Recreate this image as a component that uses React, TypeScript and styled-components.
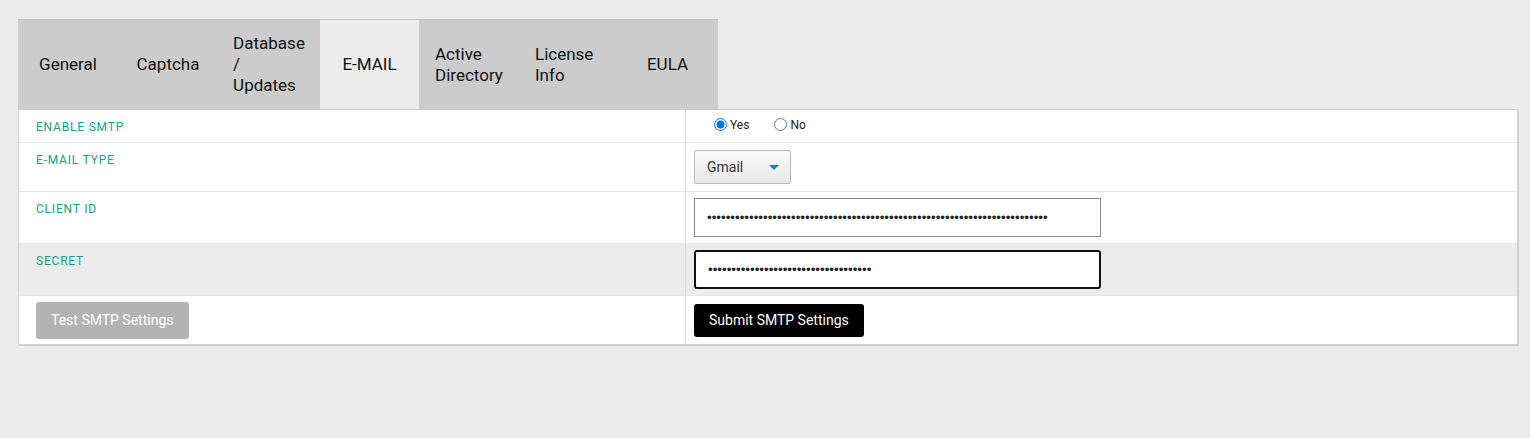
import React from 'react';
import styled, { createGlobalStyle } from 'styled-components';

const GlobalStyle = createGlobalStyle`
  html, body {
    margin: 0;
    padding: 0;
    background: #ececec;
    font-family: Roboto, "Liberation Sans", Arial, sans-serif;
  }
`;

const Page = styled.div`
  padding: 19px 12px 40px 18px;
`;

const TabBar = styled.div`
  display: flex;
  width: 700px;
  height: 90px;
  background: #cccccc;
  border-top: 1px solid #c4c4c4;
  box-sizing: border-box;
`;

const Tab = styled.div<{ $active?: boolean; $w: number }>`
  width: ${p => p.$w}px;
  flex: none;
  box-sizing: border-box;
  padding: 0 16px;
  display: flex;
  align-items: center;
  justify-content: center;
  background: ${p => (p.$active ? '#ececec' : 'transparent')};
  color: #111;
  font-size: 17px;
  line-height: 21px;
  cursor: pointer;
`;

const TabText = styled.span`
  text-align: left;
`;

const Panel = styled.div`
  width: 1500px;
  box-sizing: border-box;
  background: #fff;
  border: 1px solid #cfcfcf;
  box-shadow: 1px 1px 0 #cfcfcf;
`;

const Row = styled.div<{ $h: number; $shade?: boolean }>`
  display: grid;
  grid-template-columns: 667px 1fr;
  height: ${p => p.$h}px;
  background: ${p => (p.$shade ? '#ececec' : '#fff')};
  border-bottom: 1px solid #e6e6e6;

  &:last-child {
    border-bottom: none;
  }
`;

const LabelCell = styled.div<{ $center?: boolean }>`
  border-right: 1px solid #d6d6d6;
  padding: ${p => (p.$center ? '0 17px' : '10px 17px 0')};
  display: flex;
  align-items: ${p => (p.$center ? 'center' : 'flex-start')};
`;

const Label = styled.span`
  color: #12a08b;
  font-size: 12px;
  letter-spacing: 0.8px;
  text-transform: uppercase;
  line-height: 14px;
`;

const ValueCell = styled.div`
  padding: 0 8px;
  display: flex;
  align-items: center;
`;

const RadioGroup = styled.div`
  display: flex;
  align-items: center;
  gap: 20px;
  padding-left: 15px;
  margin-top: -3px;
`;

const RadioLabel = styled.label`
  display: flex;
  align-items: center;
  font-size: 12px;
  color: #222;

  input {
    margin: 0 3px 0 5px;
    width: 13px;
    height: 13px;
  }
`;

const SelectBox = styled.div`
  width: 97px;
  height: 34px;
  box-sizing: border-box;
  border: 1px solid #b9b9b9;
  border-radius: 2px;
  background: linear-gradient(#fafafa, #e9e9e9);
  display: flex;
  align-items: center;
  justify-content: space-between;
  padding: 0 11px 0 12px;
  font-size: 14px;
  color: #333;
`;

const Caret = styled.span`
  width: 0;
  height: 0;
  border-left: 5px solid transparent;
  border-right: 5px solid transparent;
  border-top: 5px solid #1a7fb5;
`;

const TextInput = styled.input<{ $focused?: boolean }>`
  width: 407px;
  height: 39px;
  box-sizing: border-box;
  padding: 0 12px;
  border: ${p => (p.$focused ? '2px solid #111' : '1px solid #8a8a8a')};
  border-radius: ${p => (p.$focused ? '3px' : '0')};
  font-family: "Liberation Sans", Arial, sans-serif;
  font-size: 13.33px;
  color: #222;
  background: #fff;
  outline: none;
`;

const Button = styled.button<{ $variant: 'muted' | 'dark' }>`
  font-family: Roboto, "Liberation Sans", Arial, sans-serif;
  font-size: 14px;
  color: #fff;
  border: none;
  border-radius: 3px;
  cursor: pointer;
  background: ${p => (p.$variant === 'dark' ? '#000' : '#b3b3b3')};
  height: ${p => (p.$variant === 'dark' ? '33px' : '37px')};
  padding: 0 15px;
`;

const tabs = [
  { label: 'General', w: 100 },
  { label: 'Captcha', w: 100 },
  { label: 'Database / Updates', w: 102 },
  { label: 'E-MAIL', w: 99 },
  { label: 'Active Directory', w: 100 },
  { label: 'License Info', w: 98 },
  { label: 'EULA', w: 101 },
];

export default function App() {
  return (
    <>
      <GlobalStyle />
      <Page>
        <TabBar>
          {tabs.map(t => (
            <Tab key={t.label} $w={t.w} $active={t.label === 'E-MAIL'}>
              <TabText>{t.label}</TabText>
            </Tab>
          ))}
        </TabBar>
        <Panel>
          <Row $h={32}>
            <LabelCell>
              <Label>Enable SMTP</Label>
            </LabelCell>
            <ValueCell>
              <RadioGroup>
                <RadioLabel>
                  <input type="radio" name="smtp" defaultChecked />
                  Yes
                </RadioLabel>
                <RadioLabel>
                  <input type="radio" name="smtp" />
                  No
                </RadioLabel>
              </RadioGroup>
            </ValueCell>
          </Row>
          <Row $h={48}>
            <LabelCell>
              <Label>E-mail Type</Label>
            </LabelCell>
            <ValueCell>
              <SelectBox>
                Gmail
                <Caret />
              </SelectBox>
            </ValueCell>
          </Row>
          <Row $h={51}>
            <LabelCell>
              <Label>Client ID</Label>
            </LabelCell>
            <ValueCell>
              <TextInput type="password" readOnly value={'x'.repeat(73)} />
            </ValueCell>
          </Row>
          <Row $h={51} $shade>
            <LabelCell>
              <Label>Secret</Label>
            </LabelCell>
            <ValueCell>
              <TextInput type="password" readOnly $focused value={'x'.repeat(35)} />
            </ValueCell>
          </Row>
          <Row $h={48}>
            <LabelCell $center>
              <Button $variant="muted">Test SMTP Settings</Button>
            </LabelCell>
            <ValueCell>
              <Button $variant="dark">Submit SMTP Settings</Button>
            </ValueCell>
          </Row>
        </Panel>
      </Page>
    </>
  );
}
